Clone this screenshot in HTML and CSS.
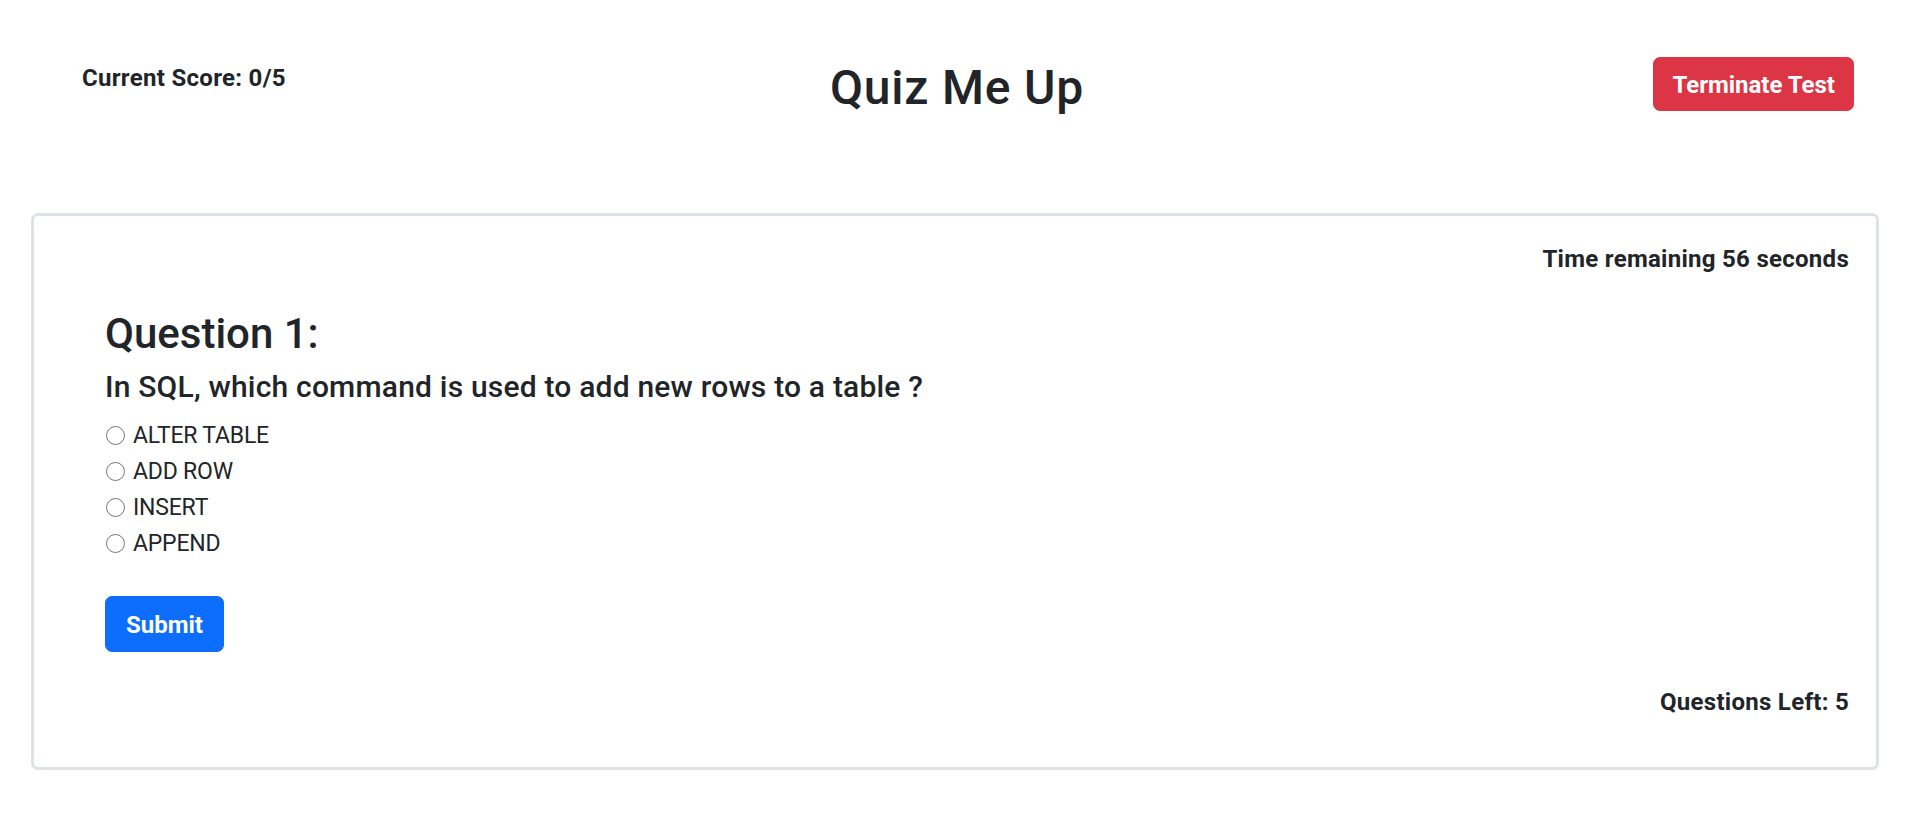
FILE: index.html
```html
<!DOCTYPE html>
<html lang="en">
<head>
<meta charset="utf-8">
<title>Quiz Me Up</title>
<link rel="stylesheet" href="styles.css">
</head>
<body>
<header class="topbar">
  <div class="score">Current Score: 0/5</div>
  <h1 class="title">Quiz Me Up</h1>
  <div class="actions"><button class="btn btn-danger" type="button">Terminate Test</button></div>
</header>
<main class="card">
  <div class="timer">Time remaining 56 seconds</div>
  <section class="question">
    <h3 class="q-title">Question 1:</h3>
    <h5 class="q-text">In SQL, which command is used to add new rows to a table ?</h5>
    <form class="options">
      <label class="option"><input type="radio" name="answer" value="1"><span>ALTER TABLE</span></label>
      <label class="option"><input type="radio" name="answer" value="2"><span>ADD ROW</span></label>
      <label class="option"><input type="radio" name="answer" value="3"><span>INSERT</span></label>
      <label class="option"><input type="radio" name="answer" value="4"><span>APPEND</span></label>
      <div class="submit-row"><button class="btn btn-primary" type="button">Submit</button></div>
    </form>
  </section>
  <div class="left">Questions Left: 5</div>
</main>
</body>
</html>
```
FILE: styles.css
```css
* { box-sizing: border-box; }
html, body { margin: 0; padding: 0; background: #fff; }
body {
  font-family: Roboto, "Liberation Sans", Arial, sans-serif;
  font-size: 24px;
  line-height: 36px;
  color: #212529;
}
.topbar {
  display: grid;
  grid-template-columns: 1fr auto 1fr;
  align-items: start;
  padding: 57px 60px 0 60px;
  height: 213px;
}
.score {
  font-weight: 700;
  letter-spacing: 0.3px;
  padding: 3px 0 0 22px;
}
.title {
  margin: 0;
  font-size: 48px;
  font-weight: 500;
  line-height: 57.6px;
  letter-spacing: 0.8px;
  text-align: center;
  padding-top: 2px;
}
.actions { display: flex; justify-content: flex-end; }
.btn {
  font-family: inherit;
  font-size: 24px;
  font-weight: 700;
  line-height: 36px;
  color: #fff;
  border: 1.5px solid transparent;
  border-radius: 7px;
  padding: 9px 18px 7px;
  cursor: pointer;
}
.btn-danger { background: #dc3545; border-color: #dc3545; }
.btn-primary { background: #0d6efd; border-color: #0d6efd; padding: 9.5px 20px 8px; }
.card {
  margin: 0 35px 0 31px;
  border: 3px solid #dee2e6;
  border-radius: 7px;
  padding: 25px 27px 47px 27px;
  display: flex;
  flex-direction: column;
}
.timer, .left {
  font-weight: 700;
  letter-spacing: 0.28px;
  text-align: right;
}
.question {
  padding: 32px 0 0 44px;
}
.q-title {
  margin: 0 0 10px;
  font-size: 42px;
  font-weight: 500;
  line-height: 50.4px;
}
.q-text {
  margin: 0 0 13px;
  font-size: 30px;
  font-weight: 500;
  line-height: 36px;
  letter-spacing: 0.2px;
}
.options { display: flex; flex-direction: column; margin: 0; }
.option {
  display: flex;
  align-items: center;
  height: 36px;
  font-size: 23px;
  letter-spacing: -0.2px;
  cursor: pointer;
}
.option input {
  appearance: none;
  -webkit-appearance: none;
  width: 19px;
  height: 19px;
  margin: 0 8px 0 1px;
  border: 1.5px solid #767676;
  border-radius: 50%;
  background: #fff;
  position: relative;
  top: -1px;
}
.submit-row { padding-top: 34px; }
.left { margin-top: 32px; }
```
